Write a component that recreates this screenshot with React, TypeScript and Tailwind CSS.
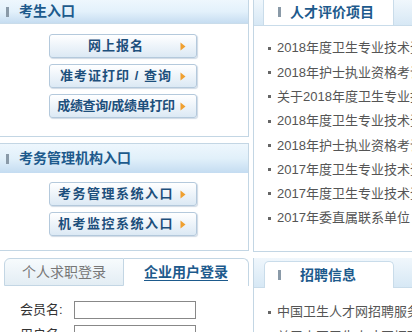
import React from "react";

const font = "font-['Liberation_Sans','Noto_Sans_CJK_SC',sans-serif]";

const Arrow = () => (
	<svg width="6" height="9" viewBox="0 0 6 9" className="shrink-0">
		<path d="M0.5 0.5 L5.5 4.5 L0.5 8.5 Z" fill="#f0a030" />
	</svg>
);

const EntryButton = ({label, spacing}: {label: string, spacing: string}) => (
	<div className="flex items-center justify-between w-[148px] h-[24px] shrink-0 rounded-[3px] border border-[#b4c9dc] bg-gradient-to-b from-[#ffffff] to-[#dce9f4] shadow-[1px_1px_1px_rgba(120,150,180,0.35)] pl-[3px] pr-[10px]">
		<span className={`flex-1 text-center font-bold text-[13px] text-[#1d4f7c] whitespace-nowrap ${spacing}`}>{label}</span>
		<Arrow />
	</div>
);

const Bar = () => <span className="w-[3px] h-[10px] bg-[#8a9aa8] shrink-0" />;

const news = [
	"2018年度卫生专业技术资格考试",
	"2018年护士执业资格考试",
	"关于2018年度卫生专业技术",
	"2018年度卫生专业技术资格考试",
	"2018年护士执业资格考试",
	"2017年度卫生专业技术资格考试",
	"2017年度卫生专业技术资格考试",
	"2017年委直属联系单位",
];

const NewsItem = ({text}: {text: string}) => (
	<li className="flex items-center gap-[6px] h-[24.3px] shrink-0 text-[13px] text-[#555]">
		<span className="w-[3px] h-[3px] bg-[#666] shrink-0" />
		<span>{text}</span>
	</li>
);

export default function App() {
	return (
		<div className={`flex w-[412px] h-[332px] overflow-hidden bg-white ${font}`}>
			<div className="flex flex-col w-[249px] shrink-0">
				<div className="flex flex-col h-[137px] shrink-0 border-r border-b border-[#c3d6e4]">
					<div className="flex items-center h-[24px] pl-[6px] gap-[10px] bg-gradient-to-b from-[#eef7fd] via-[#e3f1fb] to-[#c6ddf1] border-b border-[#c9dcea]">
						<Bar />
						<span className="font-bold text-[14px] text-[#1d5a8c]">考生入口</span>
					</div>
					<div className="flex flex-col items-center gap-[6px] pt-[10px] pr-[3px]">
						<EntryButton label="网上报名" spacing="tracking-[1px]" />
						<EntryButton label="准考证打印 / 查询" spacing="tracking-[1px]" />
						<EntryButton label="成绩查询/成绩单打印" spacing="tracking-[-0.3px]" />
					</div>
				</div>
				<div className="flex flex-col h-[108px] shrink-0 mt-[6px] border-r border-t border-b border-[#c3d6e4]">
					<div className="flex items-center h-[29px] shrink-0 pl-[6px] gap-[10px] bg-gradient-to-b from-[#eef7fd] via-[#e1f0fa] to-[#c4dcf1]">
						<Bar />
						<span className="font-bold text-[14px] text-[#1d5a8c]">考务管理机构入口</span>
					</div>
					<div className="flex flex-col items-center gap-[6px] pt-[9px] pr-[3px]">
						<EntryButton label="考务管理系统入口" spacing="tracking-[1.5px]" />
						<EntryButton label="机考监控系统入口" spacing="tracking-[1.5px]" />
					</div>
				</div>
				<div className="flex flex-col mt-[7px] pl-[4px]">
					<div className="flex h-[28px] shrink-0">
						<div className="flex items-center justify-center w-[120px] h-[28px] rounded-tl-[6px] border border-[#c3d6e4] bg-gradient-to-b from-[#f7fbfd] to-[#e3edf4] text-[14px] text-[#777]">个人求职登录</div>
						<div className="flex items-center justify-center w-[125px] h-[28px] rounded-tr-[6px] border border-l-0 border-b-0 border-[#c3d6e4] bg-white text-[14px] font-bold text-[#1d5a8c] underline underline-offset-[3px]">企业用户登录</div>
					</div>
					<div className="flex flex-col gap-[5px] pt-[14px] pl-[16px]">
						<div className="flex items-center gap-[8px]">
							<span className="text-[13px] text-[#333] w-[46px]">会员名:</span>
							<div className="w-[122px] h-[18px] border border-[#888] bg-white" />
						</div>
						<div className="flex items-center gap-[8px]">
							<span className="text-[13px] text-[#333] w-[46px]">用户名:</span>
							<div className="w-[122px] h-[18px] border border-[#888] bg-white" />
						</div>
					</div>
				</div>
			</div>
			<div className="flex flex-col flex-1 pl-[4px]">
				<div className="flex flex-col h-[252px] shrink-0 border-l border-b border-[#c3d6e4]">
					<div className="flex items-end h-[26px] shrink-0 bg-gradient-to-b from-[#f0f7fc] to-[#d7e8f5] border-b border-[#c9dcea] pl-[9px]">
						<div className="flex items-center gap-[9px] w-[131px] h-[26px] pl-[14px] bg-white border-l border-r border-[#c9dcea]">
							<Bar />
							<span className="font-bold text-[14px] text-[#1d5a8c]">人才评价项目</span>
						</div>
					</div>
					<ul className="flex flex-col pt-[10px] pl-[14px] whitespace-nowrap overflow-hidden">
						{news.map((n, i) => <NewsItem key={i} text={n} />)}
					</ul>
				</div>
				<div className="flex flex-col mt-[6px] border-l border-[#c3d6e4]">
					<div className="flex items-end h-[30px] shrink-0 bg-gradient-to-b from-[#f0f7fc] to-[#d7e8f5] border-b border-[#c9dcea] pl-[10px]">
						<div className="flex items-center gap-[19px] w-[130px] h-[27px] -mb-px pl-[13px] bg-white border border-b-0 border-[#c9dcea] rounded-t-[5px]">
							<Bar />
							<span className="font-bold text-[14px] text-[#1d5a8c]">招聘信息</span>
						</div>
					</div>
					<ul className="flex flex-col pt-[12px] pl-[14px] whitespace-nowrap overflow-hidden">
						<NewsItem text="中国卫生人才网招聘服务" />
						<NewsItem text="关于中国卫生人才网招聘" />
					</ul>
				</div>
			</div>
		</div>
	);
}
